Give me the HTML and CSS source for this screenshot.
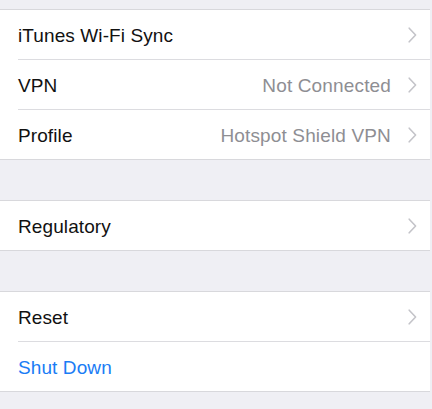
FILE: index.html
```html
<!DOCTYPE html>
<html>
<head>
<meta charset="utf-8">
<link rel="stylesheet" href="styles.css">
</head>
<body>
<div class="page">
  <div class="group group-first">
    <div class="cell">
      <span class="label">iTunes Wi-Fi Sync</span>
      <span class="accessory"><svg class="chev" viewBox="0 0 9 16"><polyline points="1.2,1.2 7.6,8 1.2,14.8"/></svg></span>
    </div>
    <div class="cell">
      <span class="label">VPN</span>
      <span class="accessory"><span class="value">Not Connected</span><svg class="chev" viewBox="0 0 9 16"><polyline points="1.2,1.2 7.6,8 1.2,14.8"/></svg></span>
    </div>
    <div class="cell">
      <span class="label">Profile</span>
      <span class="accessory"><span class="value">Hotspot Shield VPN</span><svg class="chev" viewBox="0 0 9 16"><polyline points="1.2,1.2 7.6,8 1.2,14.8"/></svg></span>
    </div>
  </div>
  <div class="group">
    <div class="cell">
      <span class="label">Regulatory</span>
      <span class="accessory"><svg class="chev" viewBox="0 0 9 16"><polyline points="1.2,1.2 7.6,8 1.2,14.8"/></svg></span>
    </div>
  </div>
  <div class="group">
    <div class="cell">
      <span class="label">Reset</span>
      <span class="accessory"><svg class="chev" viewBox="0 0 9 16"><polyline points="1.2,1.2 7.6,8 1.2,14.8"/></svg></span>
    </div>
    <div class="cell">
      <span class="label link">Shut Down</span>
    </div>
  </div>
</div>
</body>
</html>
```
FILE: styles.css
```css
html, body {
  margin: 0;
  padding: 0;
  background: #efeff4;
}
body {
  font-family: "Liberation Sans", Arial, sans-serif;
  font-size: 19px;
  color: #111;
  width: 432px;
  height: 409px;
  overflow: hidden;
}
.page {
  display: flex;
  flex-direction: column;
  gap: 40px;
  padding-top: 9px;
  padding-right: 2px;
}
.group {
  background: #fff;
  border-top: 1px solid #d8d8dc;
  border-bottom: 1px solid #d8d8dc;
  padding-left: 18px;
}
.cell {
  height: 49px;
  display: flex;
  align-items: center;
  justify-content: space-between;
  padding-right: 13px;
  border-bottom: 1px solid #dcdce0;
}
.cell:last-child {
  border-bottom: none;
}
.label {
  line-height: 1;
  padding-top: 1px;
  letter-spacing: 0.1px;
}
.link {
  color: #1a7cf5;
}
.accessory {
  display: flex;
  align-items: center;
  gap: 17px;
}
.value {
  color: #8e8e93;
  line-height: 1;
  padding-top: 1px;
  letter-spacing: 0.15px;
}
.chev {
  width: 9px;
  height: 16px;
  fill: none;
  stroke: #c4c4c9;
  stroke-width: 1.6;
  stroke-linecap: round;
  stroke-linejoin: round;
}
```
